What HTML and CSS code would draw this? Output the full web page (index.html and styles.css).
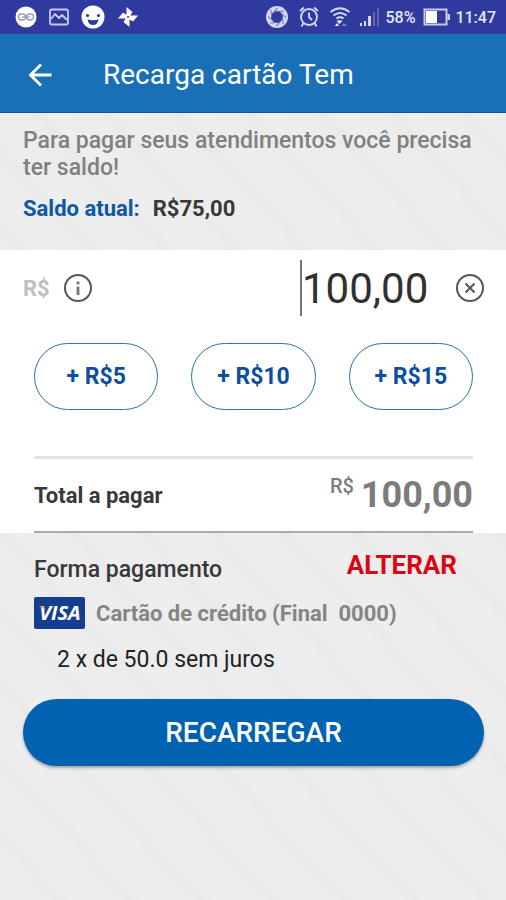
FILE: index.html
```html
<!DOCTYPE html>
<html lang="pt-BR">
<head>
<meta charset="utf-8">
<meta name="viewport" content="width=device-width, initial-scale=1">
<title>Recarga cartão Tem</title>
<link rel="stylesheet" href="styles.css">
</head>
<body>
<div class="status">
  <div class="status-group notifications">
    <svg width="22" height="22" viewBox="0 0 22 22"><circle cx="11" cy="11" r="10.5" fill="#fff"/><g fill="none" stroke="#9a9bb8" stroke-width="1.3"><rect x="3.5" y="8" width="7" height="6" rx="3"/><rect x="11.5" y="8" width="7" height="6" rx="3"/><path d="M7 11h8"/></g></svg>
    <svg width="20" height="18" viewBox="0 0 20 18" fill="none" stroke="#c9caef" stroke-width="1.8"><rect x="1" y="1.5" width="18" height="15" rx="1.5"/><path d="M2 11l4-5 4 4 3-3 5 5" stroke-linejoin="round"/></svg>
    <svg width="24" height="24" viewBox="0 0 24 24"><circle cx="12" cy="12" r="11.5" fill="#fff"/><circle cx="6.5" cy="10.5" r="1.6" fill="#303a9e"/><circle cx="17.5" cy="10.5" r="1.6" fill="#303a9e"/><path d="M6.5 14.5q5.5 1.5 11 0q-1 5.5-5.5 5.5t-5.5-5.5z" fill="#303a9e"/></svg>
    <svg width="22" height="22" viewBox="0 0 22 22" fill="#fff"><path id="blade" d="M9.5 11V1L15.5 6 12.5 11z"/><use href="#blade" transform="rotate(90 11 11)"/><use href="#blade" transform="rotate(180 11 11)"/><use href="#blade" transform="rotate(270 11 11)"/><circle cx="11" cy="11" r="1" fill="#303a9e"/></svg>
  </div>
  <div class="status-group">
    <svg width="24" height="24" viewBox="0 0 24 24" fill="none"><circle cx="12" cy="12" r="8.5" stroke="#d5d6f3" stroke-width="5"/><g stroke="#6d72bd"><path id="slat" d="M12 6.5L19 6"/><use href="#slat" transform="rotate(45 12 12)"/><use href="#slat" transform="rotate(90 12 12)"/><use href="#slat" transform="rotate(135 12 12)"/><use href="#slat" transform="rotate(180 12 12)"/><use href="#slat" transform="rotate(225 12 12)"/><use href="#slat" transform="rotate(270 12 12)"/><use href="#slat" transform="rotate(315 12 12)"/></g></svg>
    <svg class="gap-wide" width="20" height="22" viewBox="0 0 20 22" fill="none" stroke="#d5d6f3" stroke-width="1.9"><circle cx="10" cy="11" r="8"/><path d="M10 6.5V11l3 3M1 5l4-3.5M19 5l-4-3.5M4.5 17l-2 3.5M15.5 17l2 3.5"/></svg>
    <svg class="gap-wide" width="22" height="22" viewBox="0 0 22 22" fill="none" stroke="#d5d6f3" stroke-width="2"><path d="M1.5 6q9.5-7.5 19 0M4.5 9.5q6.5-5 13 0M7.5 12.5q3.5-2.5 7 0"/><path d="M7.5 14.5h6L10.5 18zM8 17l-2 3h4z" fill="#fff" stroke="none"/><path d="M15 17l3 3h-5z" fill="#8286cb" stroke="none"/></svg>
    <svg class="gap-signal" width="20" height="19" viewBox="0 0 20 19"><path d="M1 15h2v3H1zM5 13h2v5H5zM9 8h3v10H9z" fill="#d5d6f3"/><path d="M14 4h2v14h-2zM18 0h2v18h-2z" fill="#6167b7"/></svg>
    <span class="battery-label">58%</span>
    <svg class="battery" width="27" height="18" viewBox="0 0 27 18"><rect x="1.5" y="1.5" width="22" height="15" fill="none" stroke="#c9caef" stroke-width="2"/><path d="M3 3h11v12H3z" fill="#fff"/><path d="M24.5 6H27v6h-2.5z" fill="#c9caef"/></svg>
    <time class="clock">11:47</time>
  </div>
</div>

<header class="appbar">
  <button class="icon-button" type="button" aria-label="Voltar">
    <svg width="24" height="24" viewBox="0 0 24 24" fill="none" stroke="#fff" stroke-width="2.8"><path d="M23.5 12H3M13 1.5L2.5 12 13 22.5"/></svg>
  </button>
  <h1 class="title">Recarga cartão Tem</h1>
</header>

<main class="content">
  <section class="intro">
    <p class="message">Para pagar seus atendimentos você precisa ter saldo!</p>
    <p class="balance"><span class="balance-label">Saldo atual:</span><span>R$75,00</span></p>
  </section>

  <section class="panel">
    <div class="amount-row">
      <label class="currency" for="amount">R$</label>
      <button class="icon-button" type="button" aria-label="Informações">
        <svg width="28" height="28" viewBox="0 0 28 28" fill="none" stroke="#555" stroke-width="2"><circle cx="14" cy="14" r="13"/><path d="M14 12.5v8.5M14 7.5v3" stroke-width="2.8" stroke="#777"/></svg>
      </button>
      <input class="amount" id="amount" type="text" inputmode="decimal" value="100,00">
      <button class="icon-button" type="button" aria-label="Limpar">
        <svg width="28" height="28" viewBox="0 0 28 28" fill="none" stroke="#555" stroke-width="2"><circle cx="14" cy="14" r="13"/><path d="M9.5 9.5l9 9M18.5 9.5l-9 9"/></svg>
      </button>
    </div>
    <div class="chips">
      <button class="chip" type="button">+ R$5</button>
      <button class="chip" type="button">+ R$10</button>
      <button class="chip" type="button">+ R$15</button>
    </div>
    <div class="total">
      <span>Total a pagar</span>
      <span class="total-value"><span class="total-currency">R$</span><span class="total-amount">100,00</span></span>
    </div>
  </section>

  <section class="payment">
    <div class="payment-head">
      <h2 class="payment-title">Forma pagamento</h2>
      <button class="change" type="button">ALTERAR</button>
    </div>
    <div class="card">
      <svg width="51" height="32" viewBox="0 0 51 32" role="img" aria-label="Visa"><rect width="51" height="32" rx="2" fill="#153f8e"/><text class="visa" x="26" y="23" text-anchor="middle">VISA</text><path d="M4.5 9h5l2 5q-2-3.5-7-5z" fill="#e5a33c"/></svg>
      <span class="card-name">Cartão de crédito (Final&nbsp; 0000)</span>
    </div>
    <p class="installments">2 x de 50.0 sem juros</p>
    <button class="submit" type="button">RECARREGAR</button>
  </section>
</main>
</body>
</html>
```
FILE: styles.css
```css
* {
  box-sizing: border-box;
}

body {
  display: flex;
  flex-direction: column;
  min-height: 100vh;
  margin: 0;
  font-family: Roboto, "Liberation Sans", sans-serif;
  font-size: 22px;
  color: #383838;
  background: #ececec;
}

h1, h2, p {
  margin: 0;
}

button {
  padding: 0;
  border: 0;
  background: none;
  font-family: inherit;
  cursor: pointer;
}

svg {
  display: block;
  flex: none;
}

.status {
  display: flex;
  align-items: center;
  justify-content: space-between;
  height: 34px;
  padding: 0 10px 0 15px;
  background: #303a9e;
  color: #e6e7fa;
  font-size: 16px;
  font-weight: 500;
}

.status-group {
  display: flex;
  align-items: center;
}

.notifications {
  gap: 12px;
}

.gap-wide {
  margin-left: 10px;
}

.gap-signal {
  margin-left: 8px;
}

.battery-label {
  margin-left: 6px;
}

.battery {
  margin-left: 8px;
}

.clock {
  margin-left: 5px;
}

.appbar {
  display: flex;
  align-items: center;
  gap: 51px;
  height: 79px;
  padding: 3px 28px 0;
  background: #1a70b7;
  border-bottom: 1px solid #0d5796;
}

.icon-button {
  flex: none;
}

.title {
  font-size: 28px;
  font-weight: 400;
  color: #fff;
}

.content {
  flex: 1;
  background: repeating-linear-gradient(47deg, #eeeeee 0, #ececec 36px, #e9e9e9 44px, #eeeeee 52px);
}

.intro {
  padding: 14px 23px 28px;
  font-weight: 700;
  line-height: 27px;
}

.message {
  font-size: 23px;
  font-weight: 500;
  color: #808080;
}

.balance {
  display: flex;
  gap: 13px;
  margin-top: 14px;
}

.balance-label {
  color: #0d58a6;
}

.panel {
  padding: 10px 22px 0;
  background: #fff;
}

.amount-row {
  display: flex;
  align-items: center;
}

.currency {
  margin: 0 14px 0 1px;
  font-weight: 700;
  color: #c0c0c0;
}

.amount {
  width: 128px;
  height: 56px;
  margin: 0 28px 0 auto;
  padding: 0;
  border: 0;
  border-left: 2px solid #777;
  background: none;
  font-family: inherit;
  font-size: 42px;
  color: #303030;
  text-align: right;
  outline: 0;
}

.chips {
  display: grid;
  grid-template-columns: repeat(3, 1fr);
  gap: 33px;
  margin: 27px 11px 46px 12px;
}

.chip {
  height: 67px;
  border: 1px solid #2674ac;
  border-radius: 34px;
  font-size: 23px;
  font-weight: 700;
  color: #0c4fa0;
}

.total {
  display: flex;
  align-items: center;
  justify-content: space-between;
  height: 77px;
  margin: 0 11px 0 12px;
  border-top: 3px solid #e2e2e2;
  border-bottom: 2px solid #aaa;
  font-weight: 700;
}

.total-value {
  display: flex;
  align-items: flex-start;
  gap: 7px;
  color: #7c7c7c;
}

.total-currency {
  font-size: 20px;
  font-weight: 500;
}

.total-amount {
  font-size: 36px;
}

.payment {
  padding: 18px 22px 32px 23px;
}

.payment-head {
  display: flex;
  align-items: flex-start;
  justify-content: space-between;
  padding: 0 27px 0 11px;
}

.payment-title {
  padding-top: 5px;
  font-size: 23px;
  font-weight: 500;
  line-height: 28px;
}

.change {
  font-size: 26px;
  font-weight: 700;
  line-height: 28px;
  color: #dc0510;
}

.card {
  display: flex;
  align-items: center;
  gap: 11px;
  margin: 13px 0 0 11px;
}

.visa {
  font-family: "Open Sans", sans-serif;
  font-size: 20px;
  font-style: italic;
  font-weight: 700;
  fill: #fff;
}

.card-name {
  font-weight: 700;
  color: #858585;
}

.installments {
  margin: 17px 0 25px 34px;
  font-size: 23px;
  line-height: 28px;
  color: #222;
}

.submit {
  width: 100%;
  height: 67px;
  border-radius: 34px;
  background: #0062b1;
  box-shadow: 0 2px 3px rgba(0, 0, 0, 0.3);
  font-size: 28px;
  font-weight: 500;
  color: #fff;
}
```
